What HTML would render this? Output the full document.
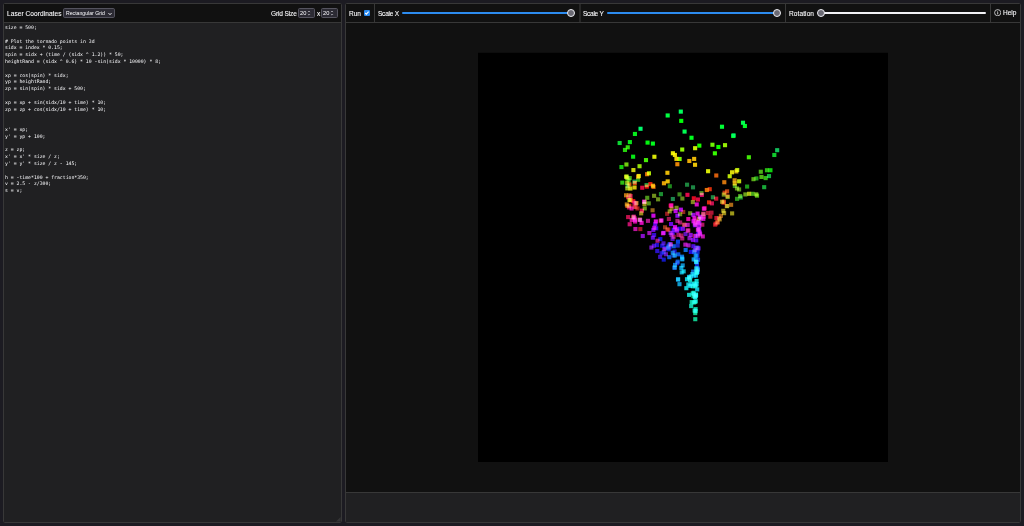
<!DOCTYPE html>
<html lang="en">
<head>
<meta charset="utf-8">
<title>Laser Coordinates</title>
<style>
html,body{margin:0;padding:0;}
body{width:1024px;height:526px;overflow:hidden;background:#1c1b22;color:#fbfbfe;font-family:"Liberation Sans",sans-serif;font-size:6.55px;position:relative;}
.panel{position:absolute;top:3px;height:518px;border:1px solid #383838;background:#111111;box-sizing:content-box;border-radius:1.6px;overflow:hidden;}
#left{left:3px;width:337px;}
#right{left:345px;width:674px;}
.hdr{position:absolute;left:0;top:0;right:0;height:18px;background:#111111;border-bottom:1px solid #383838;}
.hdr .t{position:absolute;top:0;height:18px;line-height:20.4px;white-space:nowrap;will-change:transform;-webkit-text-stroke:0.09px #fbfbfe;}
.sep{position:absolute;top:0;width:1px;height:18px;background:#383838;}
#code{position:absolute;left:0;top:19px;width:337px;height:499px;background:#202022;margin:0;padding:0;overflow:hidden;}
#code pre{margin:0;position:absolute;left:0.5px;top:2.0px;font-family:"DejaVu Sans Mono","Liberation Mono",monospace;font-size:4.805px;line-height:6.79px;color:#fbfbfe;white-space:pre;will-change:transform;}
.sel{position:absolute;left:59px;top:4.2px;width:50px;height:7.6px;border:1px solid #54535e;border-radius:1.8px;background:#2b2a33;font-size:5.16px;line-height:9.6px;}
.sel span{position:absolute;left:1.9px;top:0;white-space:nowrap;will-change:transform;}
.num{position:absolute;top:4.2px;width:15px;height:7.8px;border:1px solid #55545f;border-radius:1.6px;background:#2b2a33;font-size:5.7px;line-height:9.9px;}
.num span{position:absolute;left:0.7px;top:0;will-change:transform;}
.track{position:absolute;top:8.0px;height:2.4px;border-radius:1.2px;}
.thumb{position:absolute;top:4.9px;width:6.0px;height:6.0px;border-radius:50%;background:#6b6a74;border:1.25px solid #ececf1;}
#view{position:absolute;left:0;top:19px;width:674px;height:469px;background:#111111;}
#foot{position:absolute;left:0;top:488px;width:674px;height:30px;background:#202022;border-top:1px solid #383838;box-sizing:border-box;}
#stage{position:absolute;left:0;top:0;width:1024px;height:526px;isolation:isolate;pointer-events:none;}
#stage g.pts rect{mix-blend-mode:screen;}
</style>
</head>
<body>
<div class="panel" id="left">
  <div class="hdr">
    <div class="t" style="left:3.3px;letter-spacing:0.06px">Laser Coordinates</div>
    <div class="sel"><span>Rectangular Grid</span>
      <svg style="position:absolute;left:44.1px;top:2.4px" width="4" height="4" viewBox="0 0 4 4"><path d="M0.5 1.1 L2 2.7 L3.5 1.1" fill="none" stroke="#fbfbfe" stroke-width="0.95"/></svg>
    </div>
    <div class="t" style="left:266.8px;letter-spacing:-0.14px">Grid Size</div>
    <div class="num" style="left:294px"><span>20</span>
      <svg style="position:absolute;left:8.1px;top:0.9px" width="4" height="6" viewBox="0 0 4 6"><path d="M0.9 2.1 L2 1.0 L3.1 2.1 M0.9 4.0 L2 5.1 L3.1 4.0" fill="none" stroke="#b9b9c2" stroke-width="0.75"/></svg>
    </div>
    <div class="t" style="left:312.7px">x</div>
    <div class="num" style="left:317.4px"><span>20</span>
      <svg style="position:absolute;left:8.1px;top:0.9px" width="4" height="6" viewBox="0 0 4 6"><path d="M0.9 2.1 L2 1.0 L3.1 2.1 M0.9 4.0 L2 5.1 L3.1 4.0" fill="none" stroke="#b9b9c2" stroke-width="0.75"/></svg>
    </div>
  </div>
  <div id="code"><pre>size = 500;

# Plot the tornado points in 3d
sidx = index * 0.15;
spin = sidx + (time / (sidx ^ 1.2)) * 50;
heightRand = (sidx ^ 0.6) * 10 -sin(sidx * 10000) * 8;

xp = cos(spin) * sidx;
yp = heightRand;
zp = sin(spin) * sidx + 500;

xp = xp + sin(sidx/10 + time) * 10;
zp = zp + cos(sidx/10 + time) * 10;


x' = xp;
y' = yp + 100;

z = zp;
x' = x' * size / z;
y' = y' * size / z - 145;

h = -time*100 + fraction*350;
v = 2.5 - z/300;
s = v;</pre>
    <svg style="position:absolute;right:0;bottom:0" width="4.6" height="4.6" viewBox="0 0 6 6"><path d="M6 0 L6 6 L0 6 Z" fill="#343436"/></svg>
  </div>
</div>
<div class="panel" id="right">
  <div class="hdr">
    <div class="t" style="left:3.4px">Run</div>
    <div style="position:absolute;left:18.1px;top:6.2px;width:5.9px;height:5.8px;border-radius:1px;background:#2a8bf2;">
      <svg style="position:absolute;left:0;top:0" width="5.8" height="5.8" viewBox="0 0 58 58"><path d="M12 30 L24 42 L46 17" fill="none" stroke="#ffffff" stroke-width="11"/></svg>
    </div>
    <div class="sep" style="left:28.1px"></div>
    <div class="t" style="left:32.1px;letter-spacing:-0.25px">Scale X</div>
    <div class="track" style="left:56px;width:172px;background:#2d8cf0"></div>
    <div class="thumb" style="left:221.4px"></div>
    <div class="sep" style="left:233px;width:2px;background:#272727"></div>
    <div class="t" style="left:237.2px;letter-spacing:-0.28px">Scale Y</div>
    <div class="track" style="left:261px;width:172px;background:#2d8cf0"></div>
    <div class="thumb" style="left:426.7px"></div>
    <div class="sep" style="left:438.7px"></div>
    <div class="t" style="left:442.8px;letter-spacing:0.09px">Rotation</div>
    <div class="track" style="left:472px;width:167.6px;background:#f2f2f6"></div>
    <div class="thumb" style="left:470.6px"></div>
    <div class="sep" style="left:644.0px"></div>
    <svg style="position:absolute;left:648px;top:4.9px" width="7.4" height="7.4" viewBox="0 0 74 74"><circle cx="37" cy="37" r="31" fill="none" stroke="#fbfbfe" stroke-width="7"/><path d="M37 32 V54" stroke="#fbfbfe" stroke-width="8" fill="none"/><circle cx="37" cy="22" r="4.5" fill="#fbfbfe"/></svg>
    <div class="t" style="left:657px;top:-0.9px">Help</div>
  </div>
  <div id="view"></div>
  <div id="foot"></div>
</div>
<svg id="stage" width="1024" height="526" viewBox="0 0 1024 526">
<rect x="478" y="52.8" width="410" height="409.2" fill="#000000"/>
<g class="pts">
<rect x="693.02" y="299.98" width="4.1" height="4.1" fill="#10c886"/>
<rect x="693.17" y="311.06" width="4.1" height="4.1" fill="#10c889"/>
<rect x="693.22" y="317.14" width="4.1" height="4.1" fill="#10c98c"/>
<rect x="691.74" y="300.42" width="4.1" height="4.1" fill="#10c98e"/>
<rect x="691.43" y="294.24" width="4.1" height="4.1" fill="#10c991"/>
<rect x="693.60" y="309.06" width="4.1" height="4.1" fill="#10c994"/>
<rect x="692.55" y="308.55" width="4.1" height="4.1" fill="#10ca97"/>
<rect x="690.63" y="291.37" width="4.1" height="4.1" fill="#10c999"/>
<rect x="693.89" y="292.52" width="4.1" height="4.1" fill="#10c99c"/>
<rect x="693.58" y="307.05" width="4.1" height="4.1" fill="#10caa0"/>
<rect x="689.63" y="300.06" width="4.1" height="4.1" fill="#10caa2"/>
<rect x="693.34" y="284.15" width="4.1" height="4.1" fill="#10cba6"/>
<rect x="691.96" y="292.22" width="4.1" height="4.1" fill="#0fcca9"/>
<rect x="689.15" y="304.02" width="4.1" height="4.1" fill="#0fcbab"/>
<rect x="691.55" y="290.71" width="4.1" height="4.1" fill="#0fcdaf"/>
<rect x="692.22" y="281.42" width="4.1" height="4.1" fill="#10c8ae"/>
<rect x="692.92" y="294.61" width="4.1" height="4.1" fill="#10c8b1"/>
<rect x="693.66" y="299.24" width="4.1" height="4.1" fill="#0fcdb7"/>
<rect x="690.70" y="284.23" width="4.1" height="4.1" fill="#11c7b5"/>
<rect x="688.04" y="278.27" width="4.1" height="4.1" fill="#0fcdbe"/>
<rect x="693.81" y="294.03" width="4.1" height="4.1" fill="#0fcdc0"/>
<rect x="687.05" y="292.82" width="4.1" height="4.1" fill="#0fcec3"/>
<rect x="687.24" y="275.42" width="4.1" height="4.1" fill="#0fcec7"/>
<rect x="694.52" y="278.97" width="4.1" height="4.1" fill="#0fcdc8"/>
<rect x="693.16" y="295.19" width="4.1" height="4.1" fill="#10c8c6"/>
<rect x="684.30" y="286.13" width="4.1" height="4.1" fill="#0fcbcc"/>
<rect x="694.71" y="270.89" width="4.1" height="4.1" fill="#0fcace"/>
<rect x="686.27" y="282.43" width="4.1" height="4.1" fill="#10c1c8"/>
<rect x="694.04" y="292.89" width="4.1" height="4.1" fill="#10c0c9"/>
<rect x="684.95" y="277.15" width="4.1" height="4.1" fill="#0ec4d0"/>
<rect x="694.84" y="269.55" width="4.1" height="4.1" fill="#10bcca"/>
<rect x="694.59" y="282.30" width="4.1" height="4.1" fill="#0fbdcf"/>
<rect x="695.13" y="287.35" width="4.1" height="4.1" fill="#0fbace"/>
<rect x="694.49" y="270.07" width="4.1" height="4.1" fill="#0eb8cf"/>
<rect x="681.60" y="269.32" width="4.1" height="4.1" fill="#10b1ca"/>
<rect x="693.39" y="283.04" width="4.1" height="4.1" fill="#0eb4d1"/>
<rect x="688.11" y="283.87" width="4.1" height="4.1" fill="#11a8c6"/>
<rect x="694.15" y="266.36" width="4.1" height="4.1" fill="#10a8c9"/>
<rect x="679.63" y="270.34" width="4.1" height="4.1" fill="#10a7cb"/>
<rect x="689.49" y="282.14" width="4.1" height="4.1" fill="#0daad4"/>
<rect x="693.88" y="273.49" width="4.1" height="4.1" fill="#0ea6d1"/>
<rect x="694.00" y="259.67" width="4.1" height="4.1" fill="#0ea3d1"/>
<rect x="688.87" y="274.36" width="4.1" height="4.1" fill="#1198c6"/>
<rect x="677.43" y="282.14" width="4.1" height="4.1" fill="#0f9acd"/>
<rect x="679.30" y="265.88" width="4.1" height="4.1" fill="#0e9bd2"/>
<rect x="680.25" y="257.29" width="4.1" height="4.1" fill="#0d99d4"/>
<rect x="690.37" y="272.02" width="4.1" height="4.1" fill="#0d97d5"/>
<rect x="676.11" y="277.23" width="4.1" height="4.1" fill="#0e91d0"/>
<rect x="680.66" y="263.35" width="4.1" height="4.1" fill="#1189c6"/>
<rect x="691.61" y="257.37" width="4.1" height="4.1" fill="#0d8ed5"/>
<rect x="691.99" y="273.57" width="4.1" height="4.1" fill="#0d8bd5"/>
<rect x="686.94" y="274.80" width="4.1" height="4.1" fill="#1180c5"/>
<rect x="693.67" y="253.62" width="4.1" height="4.1" fill="#0d85d3"/>
<rect x="694.36" y="260.05" width="4.1" height="4.1" fill="#0e81d3"/>
<rect x="675.94" y="277.50" width="4.1" height="4.1" fill="#1179c8"/>
<rect x="672.62" y="265.45" width="4.1" height="4.1" fill="#0f79cd"/>
<rect x="672.73" y="253.44" width="4.1" height="4.1" fill="#1075cb"/>
<rect x="673.00" y="262.85" width="4.1" height="4.1" fill="#0e76d3"/>
<rect x="687.52" y="276.30" width="4.1" height="4.1" fill="#116dc4"/>
<rect x="680.00" y="254.64" width="4.1" height="4.1" fill="#0c72d8"/>
<rect x="670.69" y="250.67" width="4.1" height="4.1" fill="#0e6cd0"/>
<rect x="691.10" y="269.54" width="4.1" height="4.1" fill="#1166c6"/>
<rect x="695.52" y="269.86" width="4.1" height="4.1" fill="#0f65cc"/>
<rect x="683.60" y="247.92" width="4.1" height="4.1" fill="#0c67d9"/>
<rect x="692.16" y="249.52" width="4.1" height="4.1" fill="#0d63d6"/>
<rect x="695.84" y="267.62" width="4.1" height="4.1" fill="#0e5ed0"/>
<rect x="675.64" y="259.60" width="4.1" height="4.1" fill="#0c5dd9"/>
<rect x="671.64" y="244.21" width="4.1" height="4.1" fill="#0c5ad7"/>
<rect x="667.24" y="255.12" width="4.1" height="4.1" fill="#0f55cd"/>
<rect x="695.14" y="266.45" width="4.1" height="4.1" fill="#0e53d3"/>
<rect x="676.23" y="252.29" width="4.1" height="4.1" fill="#0b52da"/>
<rect x="666.21" y="245.57" width="4.1" height="4.1" fill="#0f4dcc"/>
<rect x="695.98" y="257.72" width="4.1" height="4.1" fill="#0f4ace"/>
<rect x="695.46" y="266.44" width="4.1" height="4.1" fill="#1047cb"/>
<rect x="671.45" y="253.46" width="4.1" height="4.1" fill="#1144c4"/>
<rect x="675.90" y="239.58" width="4.1" height="4.1" fill="#0b43db"/>
<rect x="693.65" y="257.76" width="4.1" height="4.1" fill="#0d3fd5"/>
<rect x="680.14" y="256.33" width="4.1" height="4.1" fill="#0b3ddc"/>
<rect x="694.93" y="245.64" width="4.1" height="4.1" fill="#1039ca"/>
<rect x="667.65" y="242.13" width="4.1" height="4.1" fill="#0c37d9"/>
<rect x="672.50" y="265.77" width="4.1" height="4.1" fill="#1234c1"/>
<rect x="695.21" y="253.52" width="4.1" height="4.1" fill="#0e31d3"/>
<rect x="666.46" y="243.63" width="4.1" height="4.1" fill="#112fc4"/>
<rect x="661.64" y="250.02" width="4.1" height="4.1" fill="#102cca"/>
<rect x="694.88" y="262.57" width="4.1" height="4.1" fill="#1029c9"/>
<rect x="695.55" y="249.59" width="4.1" height="4.1" fill="#1026cb"/>
<rect x="675.63" y="243.53" width="4.1" height="4.1" fill="#1325bf"/>
<rect x="666.51" y="247.30" width="4.1" height="4.1" fill="#0b1edb"/>
<rect x="694.67" y="260.14" width="4.1" height="4.1" fill="#101ec8"/>
<rect x="663.38" y="245.87" width="4.1" height="4.1" fill="#111dc4"/>
<rect x="658.29" y="237.02" width="4.1" height="4.1" fill="#0e17d1"/>
<rect x="661.69" y="257.58" width="4.1" height="4.1" fill="#1117c4"/>
<rect x="691.93" y="250.09" width="4.1" height="4.1" fill="#0c10d8"/>
<rect x="693.94" y="233.89" width="4.1" height="4.1" fill="#0d0ed5"/>
<rect x="660.15" y="243.64" width="4.1" height="4.1" fill="#1311c4"/>
<rect x="675.16" y="261.07" width="4.1" height="4.1" fill="#1713bd"/>
<rect x="659.57" y="251.20" width="4.1" height="4.1" fill="#1811c4"/>
<rect x="677.60" y="226.60" width="4.1" height="4.1" fill="#160adf"/>
<rect x="672.53" y="249.38" width="4.1" height="4.1" fill="#1f13bd"/>
<rect x="688.75" y="249.84" width="4.1" height="4.1" fill="#1d0bdb"/>
<rect x="654.96" y="243.02" width="4.1" height="4.1" fill="#2210c9"/>
<rect x="696.13" y="232.16" width="4.1" height="4.1" fill="#240fcd"/>
<rect x="655.20" y="249.00" width="4.1" height="4.1" fill="#2811c6"/>
<rect x="667.45" y="245.45" width="4.1" height="4.1" fill="#280adf"/>
<rect x="672.43" y="228.03" width="4.1" height="4.1" fill="#2b0ae0"/>
<rect x="652.07" y="232.94" width="4.1" height="4.1" fill="#300fcd"/>
<rect x="693.99" y="245.89" width="4.1" height="4.1" fill="#320dd5"/>
<rect x="696.02" y="245.81" width="4.1" height="4.1" fill="#350ed0"/>
<rect x="654.13" y="226.27" width="4.1" height="4.1" fill="#380cd7"/>
<rect x="671.58" y="227.66" width="4.1" height="4.1" fill="#3b0ae0"/>
<rect x="658.10" y="254.82" width="4.1" height="4.1" fill="#3d13bf"/>
<rect x="651.82" y="243.72" width="4.1" height="4.1" fill="#4011c5"/>
<rect x="692.85" y="223.18" width="4.1" height="4.1" fill="#440cd7"/>
<rect x="670.62" y="230.81" width="4.1" height="4.1" fill="#470ae0"/>
<rect x="691.30" y="244.17" width="4.1" height="4.1" fill="#4a0cd9"/>
<rect x="661.45" y="241.30" width="4.1" height="4.1" fill="#4914bb"/>
<rect x="696.32" y="227.68" width="4.1" height="4.1" fill="#4d10c9"/>
<rect x="694.17" y="238.31" width="4.1" height="4.1" fill="#520dd5"/>
<rect x="696.45" y="246.44" width="4.1" height="4.1" fill="#5310ca"/>
<rect x="670.52" y="236.86" width="4.1" height="4.1" fill="#5214b7"/>
<rect x="653.22" y="221.93" width="4.1" height="4.1" fill="#5c0bdb"/>
<rect x="693.00" y="248.02" width="4.1" height="4.1" fill="#5912c1"/>
<rect x="650.77" y="235.63" width="4.1" height="4.1" fill="#620cd9"/>
<rect x="683.52" y="231.93" width="4.1" height="4.1" fill="#5b14b9"/>
<rect x="669.01" y="222.01" width="4.1" height="4.1" fill="#6a09e1"/>
<rect x="663.90" y="252.19" width="4.1" height="4.1" fill="#5f15b6"/>
<rect x="680.84" y="226.74" width="4.1" height="4.1" fill="#700adf"/>
<rect x="668.51" y="230.87" width="4.1" height="4.1" fill="#6415b5"/>
<rect x="651.29" y="227.82" width="4.1" height="4.1" fill="#740bdb"/>
<rect x="690.88" y="237.85" width="4.1" height="4.1" fill="#770cd9"/>
<rect x="697.22" y="229.25" width="4.1" height="4.1" fill="#7310c9"/>
<rect x="697.29" y="221.01" width="4.1" height="4.1" fill="#770fcd"/>
<rect x="675.13" y="228.65" width="4.1" height="4.1" fill="#8309e1"/>
<rect x="649.34" y="245.48" width="4.1" height="4.1" fill="#7514bb"/>
<rect x="675.35" y="213.68" width="4.1" height="4.1" fill="#8909e1"/>
<rect x="696.48" y="220.76" width="4.1" height="4.1" fill="#850ed1"/>
<rect x="688.59" y="232.88" width="4.1" height="4.1" fill="#8d0bdb"/>
<rect x="640.71" y="233.96" width="4.1" height="4.1" fill="#880fcc"/>
<rect x="691.32" y="212.82" width="4.1" height="4.1" fill="#920cd9"/>
<rect x="697.21" y="224.31" width="4.1" height="4.1" fill="#8f0ecf"/>
<rect x="661.54" y="230.85" width="4.1" height="4.1" fill="#9c09e1"/>
<rect x="687.47" y="236.21" width="4.1" height="4.1" fill="#8515b6"/>
<rect x="674.60" y="227.18" width="4.1" height="4.1" fill="#8416b1"/>
<rect x="696.63" y="226.87" width="4.1" height="4.1" fill="#9c0ed1"/>
<rect x="662.29" y="247.21" width="4.1" height="4.1" fill="#8816b1"/>
<rect x="669.44" y="232.84" width="4.1" height="4.1" fill="#8a16b0"/>
<rect x="678.82" y="207.61" width="4.1" height="4.1" fill="#af0ae0"/>
<rect x="697.66" y="230.67" width="4.1" height="4.1" fill="#a60ecf"/>
<rect x="652.29" y="225.77" width="4.1" height="4.1" fill="#b40adf"/>
<rect x="697.82" y="214.75" width="4.1" height="4.1" fill="#ab0ecf"/>
<rect x="673.58" y="209.05" width="4.1" height="4.1" fill="#bc09e1"/>
<rect x="686.52" y="243.32" width="4.1" height="4.1" fill="#9a16b3"/>
<rect x="698.12" y="232.27" width="4.1" height="4.1" fill="#a712c0"/>
<rect x="638.06" y="217.89" width="4.1" height="4.1" fill="#a913bf"/>
<rect x="647.34" y="231.00" width="4.1" height="4.1" fill="#a115b3"/>
<rect x="672.99" y="225.12" width="4.1" height="4.1" fill="#cc09e2"/>
<rect x="651.37" y="213.63" width="4.1" height="4.1" fill="#cd0adf"/>
<rect x="698.70" y="216.35" width="4.1" height="4.1" fill="#b313bf"/>
<rect x="691.47" y="219.22" width="4.1" height="4.1" fill="#ce0cd9"/>
<rect x="683.32" y="242.58" width="4.1" height="4.1" fill="#a816ae"/>
<rect x="695.51" y="211.51" width="4.1" height="4.1" fill="#d00dd5"/>
<rect x="695.77" y="219.85" width="4.1" height="4.1" fill="#b614b8"/>
<rect x="653.78" y="219.40" width="4.1" height="4.1" fill="#e00ae0"/>
<rect x="659.38" y="218.43" width="4.1" height="4.1" fill="#e109de"/>
<rect x="685.64" y="222.84" width="4.1" height="4.1" fill="#ae17a9"/>
<rect x="701.29" y="216.82" width="4.1" height="4.1" fill="#c411bc"/>
<rect x="668.74" y="242.35" width="4.1" height="4.1" fill="#a918a0"/>
<rect x="692.41" y="216.18" width="4.1" height="4.1" fill="#d90cc9"/>
<rect x="694.68" y="202.39" width="4.1" height="4.1" fill="#d70cc5"/>
<rect x="660.96" y="231.23" width="4.1" height="4.1" fill="#a9189a"/>
<rect x="700.75" y="234.37" width="4.1" height="4.1" fill="#bd13a9"/>
<rect x="685.67" y="228.45" width="4.1" height="4.1" fill="#ac1798"/>
<rect x="642.03" y="199.64" width="4.1" height="4.1" fill="#da0bbc"/>
<rect x="633.36" y="226.97" width="4.1" height="4.1" fill="#bc13a0"/>
<rect x="639.55" y="220.78" width="4.1" height="4.1" fill="#d80cb4"/>
<rect x="692.81" y="221.52" width="4.1" height="4.1" fill="#af1692"/>
<rect x="701.82" y="206.62" width="4.1" height="4.1" fill="#cc0fa5"/>
<rect x="695.74" y="233.73" width="4.1" height="4.1" fill="#b1168f"/>
<rect x="633.04" y="219.49" width="4.1" height="4.1" fill="#d00ea3"/>
<rect x="645.92" y="218.80" width="4.1" height="4.1" fill="#ab1786"/>
<rect x="633.16" y="217.87" width="4.1" height="4.1" fill="#b8148d"/>
<rect x="686.27" y="217.00" width="4.1" height="4.1" fill="#dd0aa3"/>
<rect x="629.66" y="217.89" width="4.1" height="4.1" fill="#c61191"/>
<rect x="629.55" y="206.46" width="4.1" height="4.1" fill="#c2128b"/>
<rect x="669.30" y="203.37" width="4.1" height="4.1" fill="#e2099c"/>
<rect x="655.47" y="238.70" width="4.1" height="4.1" fill="#a51875"/>
<rect x="693.56" y="222.98" width="4.1" height="4.1" fill="#ab1777"/>
<rect x="675.38" y="218.86" width="4.1" height="4.1" fill="#a31970"/>
<rect x="631.70" y="214.64" width="4.1" height="4.1" fill="#d00e86"/>
<rect x="680.23" y="236.43" width="4.1" height="4.1" fill="#a3196d"/>
<rect x="701.58" y="214.70" width="4.1" height="4.1" fill="#b21672"/>
<rect x="678.09" y="220.42" width="4.1" height="4.1" fill="#a21968"/>
<rect x="632.52" y="216.30" width="4.1" height="4.1" fill="#d20e7c"/>
<rect x="676.40" y="232.86" width="4.1" height="4.1" fill="#a11963"/>
<rect x="701.40" y="211.63" width="4.1" height="4.1" fill="#b01668"/>
<rect x="682.58" y="223.08" width="4.1" height="4.1" fill="#a21960"/>
<rect x="627.62" y="222.21" width="4.1" height="4.1" fill="#c5116c"/>
<rect x="700.28" y="222.64" width="4.1" height="4.1" fill="#ad1760"/>
<rect x="699.79" y="192.79" width="4.1" height="4.1" fill="#d50d6c"/>
<rect x="702.59" y="206.29" width="4.1" height="4.1" fill="#d20e68"/>
<rect x="692.72" y="233.85" width="4.1" height="4.1" fill="#a51857"/>
<rect x="632.39" y="200.69" width="4.1" height="4.1" fill="#d20e62"/>
<rect x="666.81" y="216.92" width="4.1" height="4.1" fill="#9e1a50"/>
<rect x="695.83" y="227.87" width="4.1" height="4.1" fill="#a61851"/>
<rect x="679.27" y="233.47" width="4.1" height="4.1" fill="#9e1a4d"/>
<rect x="626.90" y="205.40" width="4.1" height="4.1" fill="#bb1352"/>
<rect x="709.87" y="201.33" width="4.1" height="4.1" fill="#c51151"/>
<rect x="639.87" y="208.59" width="4.1" height="4.1" fill="#da0c52"/>
<rect x="626.08" y="215.06" width="4.1" height="4.1" fill="#c0124b"/>
<rect x="628.50" y="194.02" width="4.1" height="4.1" fill="#cc0f4a"/>
<rect x="685.40" y="192.78" width="4.1" height="4.1" fill="#df0a4a"/>
<rect x="671.62" y="234.73" width="4.1" height="4.1" fill="#9b1a3f"/>
<rect x="695.87" y="197.45" width="4.1" height="4.1" fill="#db0b43"/>
<rect x="640.21" y="185.69" width="4.1" height="4.1" fill="#da0b40"/>
<rect x="633.77" y="201.39" width="4.1" height="4.1" fill="#d40d3d"/>
<rect x="668.63" y="203.62" width="4.1" height="4.1" fill="#e2093a"/>
<rect x="709.44" y="210.61" width="4.1" height="4.1" fill="#af1636"/>
<rect x="626.00" y="195.21" width="4.1" height="4.1" fill="#c61134"/>
<rect x="686.34" y="228.48" width="4.1" height="4.1" fill="#9c1a32"/>
<rect x="714.34" y="215.98" width="4.1" height="4.1" fill="#bd132f"/>
<rect x="714.16" y="196.60" width="4.1" height="4.1" fill="#c3122d"/>
<rect x="705.74" y="210.95" width="4.1" height="4.1" fill="#a7182c"/>
<rect x="638.27" y="227.03" width="4.1" height="4.1" fill="#a4192a"/>
<rect x="691.75" y="196.27" width="4.1" height="4.1" fill="#de0a21"/>
<rect x="632.23" y="204.79" width="4.1" height="4.1" fill="#aa1725"/>
<rect x="693.54" y="218.59" width="4.1" height="4.1" fill="#9c1a24"/>
<rect x="713.13" y="222.65" width="4.1" height="4.1" fill="#af1620"/>
<rect x="708.31" y="214.61" width="4.1" height="4.1" fill="#a7181f"/>
<rect x="665.08" y="211.74" width="4.1" height="4.1" fill="#971b1f"/>
<rect x="631.20" y="198.98" width="4.1" height="4.1" fill="#d20e12"/>
<rect x="713.69" y="221.55" width="4.1" height="4.1" fill="#ad1718"/>
<rect x="644.81" y="184.59" width="4.1" height="4.1" fill="#dd0c0b"/>
<rect x="635.41" y="206.41" width="4.1" height="4.1" fill="#a41c19"/>
<rect x="666.32" y="227.54" width="4.1" height="4.1" fill="#95201b"/>
<rect x="665.28" y="227.43" width="4.1" height="4.1" fill="#95221b"/>
<rect x="633.50" y="204.99" width="4.1" height="4.1" fill="#a62218"/>
<rect x="648.32" y="182.05" width="4.1" height="4.1" fill="#df1b0a"/>
<rect x="715.36" y="220.39" width="4.1" height="4.1" fill="#aa2517"/>
<rect x="628.74" y="198.06" width="4.1" height="4.1" fill="#ce240f"/>
<rect x="681.19" y="209.91" width="4.1" height="4.1" fill="#942a1b"/>
<rect x="721.42" y="200.64" width="4.1" height="4.1" fill="#be2b13"/>
<rect x="706.99" y="200.33" width="4.1" height="4.1" fill="#d92b0c"/>
<rect x="707.69" y="187.16" width="4.1" height="4.1" fill="#d82e0c"/>
<rect x="722.54" y="190.63" width="4.1" height="4.1" fill="#bd3213"/>
<rect x="682.02" y="222.55" width="4.1" height="4.1" fill="#93331c"/>
<rect x="627.37" y="203.74" width="4.1" height="4.1" fill="#cb3710"/>
<rect x="721.85" y="199.66" width="4.1" height="4.1" fill="#b13916"/>
<rect x="632.73" y="180.96" width="4.1" height="4.1" fill="#d33d0d"/>
<rect x="663.00" y="225.26" width="4.1" height="4.1" fill="#933a1c"/>
<rect x="716.84" y="216.15" width="4.1" height="4.1" fill="#a53e18"/>
<rect x="725.07" y="189.28" width="4.1" height="4.1" fill="#be4413"/>
<rect x="725.51" y="194.37" width="4.1" height="4.1" fill="#bc4613"/>
<rect x="715.48" y="220.26" width="4.1" height="4.1" fill="#a24419"/>
<rect x="658.52" y="218.68" width="4.1" height="4.1" fill="#93431c"/>
<rect x="636.07" y="174.60" width="4.1" height="4.1" fill="#d7520c"/>
<rect x="724.76" y="204.02" width="4.1" height="4.1" fill="#af4d16"/>
<rect x="625.35" y="203.94" width="4.1" height="4.1" fill="#c65411"/>
<rect x="701.22" y="212.26" width="4.1" height="4.1" fill="#954a1b"/>
<rect x="714.23" y="173.44" width="4.1" height="4.1" fill="#d85e0c"/>
<rect x="651.42" y="184.75" width="4.1" height="4.1" fill="#e1630a"/>
<rect x="628.22" y="198.15" width="4.1" height="4.1" fill="#cd610f"/>
<rect x="627.30" y="182.37" width="4.1" height="4.1" fill="#cb6310"/>
<rect x="645.03" y="172.15" width="4.1" height="4.1" fill="#de6c0a"/>
<rect x="704.76" y="187.95" width="4.1" height="4.1" fill="#e06f0a"/>
<rect x="718.83" y="213.81" width="4.1" height="4.1" fill="#9f5b19"/>
<rect x="627.42" y="193.23" width="4.1" height="4.1" fill="#ab6217"/>
<rect x="722.25" y="180.18" width="4.1" height="4.1" fill="#d4740d"/>
<rect x="631.31" y="215.26" width="4.1" height="4.1" fill="#a56318"/>
<rect x="729.06" y="202.76" width="4.1" height="4.1" fill="#ac6917"/>
<rect x="675.30" y="162.18" width="4.1" height="4.1" fill="#e78508"/>
<rect x="623.98" y="193.25" width="4.1" height="4.1" fill="#bf7613"/>
<rect x="637.71" y="217.56" width="4.1" height="4.1" fill="#9d671a"/>
<rect x="650.53" y="208.23" width="4.1" height="4.1" fill="#94641b"/>
<rect x="642.79" y="199.83" width="4.1" height="4.1" fill="#98691b"/>
<rect x="624.79" y="202.40" width="4.1" height="4.1" fill="#b37916"/>
<rect x="650.89" y="183.67" width="4.1" height="4.1" fill="#e29609"/>
<rect x="732.58" y="178.24" width="4.1" height="4.1" fill="#c98b10"/>
<rect x="669.55" y="206.73" width="4.1" height="4.1" fill="#8d691c"/>
<rect x="661.88" y="181.20" width="4.1" height="4.1" fill="#e6a208"/>
<rect x="696.99" y="216.70" width="4.1" height="4.1" fill="#8e6d1c"/>
<rect x="687.27" y="158.93" width="4.1" height="4.1" fill="#e8aa07"/>
<rect x="634.41" y="201.06" width="4.1" height="4.1" fill="#a07c19"/>
<rect x="717.70" y="217.34" width="4.1" height="4.1" fill="#97781b"/>
<rect x="732.66" y="181.45" width="4.1" height="4.1" fill="#cfa20e"/>
<rect x="692.11" y="156.87" width="4.1" height="4.1" fill="#e9b707"/>
<rect x="665.37" y="170.73" width="4.1" height="4.1" fill="#e8ba07"/>
<rect x="665.65" y="179.35" width="4.1" height="4.1" fill="#e8bd07"/>
<rect x="692.99" y="162.74" width="4.1" height="4.1" fill="#e9c207"/>
<rect x="734.30" y="169.40" width="4.1" height="4.1" fill="#d1b10e"/>
<rect x="722.06" y="211.09" width="4.1" height="4.1" fill="#98861b"/>
<rect x="639.16" y="211.29" width="4.1" height="4.1" fill="#9a8a1a"/>
<rect x="674.38" y="156.82" width="4.1" height="4.1" fill="#ead007"/>
<rect x="720.04" y="199.74" width="4.1" height="4.1" fill="#95891b"/>
<rect x="632.52" y="185.45" width="4.1" height="4.1" fill="#d5c40d"/>
<rect x="721.23" y="208.76" width="4.1" height="4.1" fill="#968d1b"/>
<rect x="672.85" y="152.89" width="4.1" height="4.1" fill="#ebde06"/>
<rect x="642.38" y="201.91" width="4.1" height="4.1" fill="#97921b"/>
<rect x="730.07" y="211.35" width="4.1" height="4.1" fill="#9c981a"/>
<rect x="730.01" y="170.24" width="4.1" height="4.1" fill="#dcd90b"/>
<rect x="670.84" y="151.19" width="4.1" height="4.1" fill="#ebeb06"/>
<rect x="636.72" y="173.92" width="4.1" height="4.1" fill="#d8db0b"/>
<rect x="628.35" y="186.46" width="4.1" height="4.1" fill="#cacf0e"/>
<rect x="631.35" y="168.02" width="4.1" height="4.1" fill="#ccd40d"/>
<rect x="652.34" y="154.71" width="4.1" height="4.1" fill="#d9e608"/>
<rect x="706.04" y="169.16" width="4.1" height="4.1" fill="#daeb06"/>
<rect x="747.03" y="191.74" width="4.1" height="4.1" fill="#adbc13"/>
<rect x="690.78" y="200.00" width="4.1" height="4.1" fill="#7e891d"/>
<rect x="624.12" y="174.71" width="4.1" height="4.1" fill="#afc412"/>
<rect x="737.07" y="179.24" width="4.1" height="4.1" fill="#bfda0b"/>
<rect x="667.67" y="209.34" width="4.1" height="4.1" fill="#7a8a1d"/>
<rect x="693.07" y="146.15" width="4.1" height="4.1" fill="#caef05"/>
<rect x="674.47" y="205.78" width="4.1" height="4.1" fill="#76891d"/>
<rect x="727.66" y="174.19" width="4.1" height="4.1" fill="#bbe408"/>
<rect x="625.27" y="186.33" width="4.1" height="4.1" fill="#91b016"/>
<rect x="721.75" y="192.51" width="4.1" height="4.1" fill="#77911c"/>
<rect x="735.17" y="167.97" width="4.1" height="4.1" fill="#aee00a"/>
<rect x="646.89" y="171.29" width="4.1" height="4.1" fill="#afe608"/>
<rect x="625.12" y="180.80" width="4.1" height="4.1" fill="#88b116"/>
<rect x="652.05" y="193.77" width="4.1" height="4.1" fill="#70901c"/>
<rect x="678.10" y="212.19" width="4.1" height="4.1" fill="#69881d"/>
<rect x="688.12" y="211.22" width="4.1" height="4.1" fill="#67871d"/>
<rect x="680.33" y="196.48" width="4.1" height="4.1" fill="#65881d"/>
<rect x="656.02" y="197.28" width="4.1" height="4.1" fill="#688e1c"/>
<rect x="627.29" y="197.85" width="4.1" height="4.1" fill="#77ab17"/>
<rect x="637.49" y="164.16" width="4.1" height="4.1" fill="#92e00a"/>
<rect x="722.98" y="143.11" width="4.1" height="4.1" fill="#95ed06"/>
<rect x="743.31" y="192.37" width="4.1" height="4.1" fill="#6ba019"/>
<rect x="642.67" y="206.36" width="4.1" height="4.1" fill="#64971b"/>
<rect x="680.17" y="147.48" width="4.1" height="4.1" fill="#8ef404"/>
<rect x="734.92" y="186.41" width="4.1" height="4.1" fill="#61971b"/>
<rect x="624.64" y="174.53" width="4.1" height="4.1" fill="#77cd0f"/>
<rect x="754.20" y="192.30" width="4.1" height="4.1" fill="#68b016"/>
<rect x="624.38" y="162.43" width="4.1" height="4.1" fill="#71cc0f"/>
<rect x="737.05" y="187.39" width="4.1" height="4.1" fill="#5a981b"/>
<rect x="677.56" y="156.93" width="4.1" height="4.1" fill="#7af503"/>
<rect x="646.70" y="201.34" width="4.1" height="4.1" fill="#55941b"/>
<rect x="751.40" y="177.13" width="4.1" height="4.1" fill="#5aa718"/>
<rect x="710.40" y="142.70" width="4.1" height="4.1" fill="#6ff503"/>
<rect x="625.25" y="176.16" width="4.1" height="4.1" fill="#62d10e"/>
<rect x="645.19" y="195.75" width="4.1" height="4.1" fill="#4e951b"/>
<rect x="699.40" y="190.98" width="4.1" height="4.1" fill="#48871d"/>
<rect x="738.12" y="193.99" width="4.1" height="4.1" fill="#4b971b"/>
<rect x="754.98" y="193.61" width="4.1" height="4.1" fill="#4eab17"/>
<rect x="759.44" y="174.89" width="4.1" height="4.1" fill="#4eb515"/>
<rect x="758.75" y="169.69" width="4.1" height="4.1" fill="#4bb216"/>
<rect x="750.55" y="191.78" width="4.1" height="4.1" fill="#46a219"/>
<rect x="725.16" y="204.06" width="4.1" height="4.1" fill="#408e1c"/>
<rect x="677.48" y="192.32" width="4.1" height="4.1" fill="#3d871d"/>
<rect x="627.69" y="176.03" width="4.1" height="4.1" fill="#41a918"/>
<rect x="643.95" y="158.04" width="4.1" height="4.1" fill="#44ec06"/>
<rect x="746.81" y="155.23" width="4.1" height="4.1" fill="#41e907"/>
<rect x="732.78" y="183.96" width="4.1" height="4.1" fill="#38911c"/>
<rect x="626.60" y="178.27" width="4.1" height="4.1" fill="#39aa17"/>
<rect x="712.83" y="151.27" width="4.1" height="4.1" fill="#36fb01"/>
<rect x="725.64" y="194.96" width="4.1" height="4.1" fill="#338d1c"/>
<rect x="625.70" y="145.26" width="4.1" height="4.1" fill="#31da0c"/>
<rect x="763.59" y="176.06" width="4.1" height="4.1" fill="#30b615"/>
<rect x="620.28" y="180.59" width="4.1" height="4.1" fill="#2dbe13"/>
<rect x="764.90" y="168.17" width="4.1" height="4.1" fill="#2bb914"/>
<rect x="622.92" y="147.89" width="4.1" height="4.1" fill="#26d50d"/>
<rect x="735.00" y="196.80" width="4.1" height="4.1" fill="#29921c"/>
<rect x="697.29" y="143.58" width="4.1" height="4.1" fill="#18ff00"/>
<rect x="636.10" y="177.76" width="4.1" height="4.1" fill="#259d1a"/>
<rect x="754.34" y="176.39" width="4.1" height="4.1" fill="#22a219"/>
<rect x="716.34" y="144.93" width="4.1" height="4.1" fill="#0dff00"/>
<rect x="619.41" y="165.01" width="4.1" height="4.1" fill="#16cd0f"/>
<rect x="667.77" y="184.23" width="4.1" height="4.1" fill="#1f891d"/>
<rect x="745.06" y="184.51" width="4.1" height="4.1" fill="#1c981b"/>
<rect x="768.40" y="168.19" width="4.1" height="4.1" fill="#0ed20f"/>
<rect x="731.21" y="133.96" width="4.1" height="4.1" fill="#01fc06"/>
<rect x="679.19" y="118.83" width="4.1" height="4.1" fill="#00ff09"/>
<rect x="645.52" y="140.54" width="4.1" height="4.1" fill="#03f50f"/>
<rect x="631.07" y="154.64" width="4.1" height="4.1" fill="#07e916"/>
<rect x="627.83" y="140.04" width="4.1" height="4.1" fill="#08e61a"/>
<rect x="632.89" y="131.91" width="4.1" height="4.1" fill="#06ec1c"/>
<rect x="650.83" y="141.53" width="4.1" height="4.1" fill="#02fa1d"/>
<rect x="689.46" y="135.71" width="4.1" height="4.1" fill="#00ff1f"/>
<rect x="742.84" y="123.95" width="4.1" height="4.1" fill="#02fa24"/>
<rect x="772.27" y="152.94" width="4.1" height="4.1" fill="#10ca2c"/>
<rect x="738.69" y="195.44" width="4.1" height="4.1" fill="#1c932f"/>
<rect x="658.89" y="192.07" width="4.1" height="4.1" fill="#1c8d31"/>
<rect x="617.60" y="140.96" width="4.1" height="4.1" fill="#0dd634"/>
<rect x="719.95" y="124.68" width="4.1" height="4.1" fill="#00ff36"/>
<rect x="762.14" y="185.13" width="4.1" height="4.1" fill="#18a838"/>
<rect x="644.52" y="183.01" width="4.1" height="4.1" fill="#1b9538"/>
<rect x="665.63" y="113.42" width="4.1" height="4.1" fill="#00ff41"/>
<rect x="766.96" y="174.03" width="4.1" height="4.1" fill="#16b03f"/>
<rect x="625.58" y="183.72" width="4.1" height="4.1" fill="#18a741"/>
<rect x="740.96" y="120.68" width="4.1" height="4.1" fill="#00ff4c"/>
<rect x="685.01" y="182.64" width="4.1" height="4.1" fill="#1d863e"/>
<rect x="682.53" y="129.52" width="4.1" height="4.1" fill="#00ff53"/>
<rect x="710.83" y="195.20" width="4.1" height="4.1" fill="#1d8841"/>
<rect x="678.75" y="109.56" width="4.1" height="4.1" fill="#00ff5b"/>
<rect x="690.96" y="185.30" width="4.1" height="4.1" fill="#1d8644"/>
<rect x="731.46" y="133.36" width="4.1" height="4.1" fill="#00ff62"/>
<rect x="632.46" y="179.58" width="4.1" height="4.1" fill="#1a9e4f"/>
<rect x="775.13" y="148.14" width="4.1" height="4.1" fill="#12c15b"/>
<rect x="638.48" y="126.71" width="4.1" height="4.1" fill="#01fc6d"/>
<rect x="670.79" y="196.95" width="4.1" height="4.1" fill="#1d884d"/>
</g>
</svg>
</body>
</html>
